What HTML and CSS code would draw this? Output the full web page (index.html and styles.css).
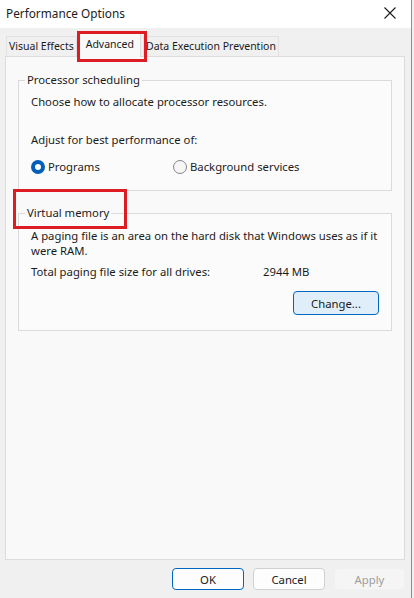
FILE: index.html
```html
<!DOCTYPE html>
<html lang="en">
<head>
<meta charset="utf-8">
<title>Performance Options</title>
<link rel="stylesheet" href="styles.css">
</head>
<body>
<div class="window">
  <div class="titlebar">
    <span class="title">Performance Options</span>
    <svg class="close" width="12" height="12" viewBox="0 0 12 12" aria-label="Close">
      <path d="M0.5 0.5 L11.5 11.5 M11.5 0.5 L0.5 11.5" stroke="#1b1b1b" stroke-width="1.1" fill="none"/>
    </svg>
  </div>
  <div class="client">
    <div class="tabs">
      <div class="tab">Visual Effects</div>
      <div class="tab selected">Advanced</div>
      <div class="tab">Data Execution Prevention</div>
    </div>
    <div class="panel">
      <fieldset class="group">
        <legend>Processor scheduling</legend>
        <p class="line">Choose how to allocate processor resources.</p>
        <p class="line adjust">Adjust for best performance of:</p>
        <div class="radios">
          <label class="radio first"><span class="dot on"></span>Programs</label>
          <label class="radio"><span class="dot"></span>Background services</label>
        </div>
      </fieldset>
      <fieldset class="group vm">
        <legend><span class="marked">Virtual memory</span></legend>
        <p class="para">A paging file is an area on the hard disk that Windows uses as if it were RAM.</p>
        <div class="total">
          <span>Total paging file size for all drives:</span>
          <span>2944 MB</span>
        </div>
        <div class="change-row">
          <button class="btn change">Change...</button>
        </div>
      </fieldset>
    </div>
    <div class="actions">
      <button class="btn default">OK</button>
      <button class="btn">Cancel</button>
      <button class="btn disabled">Apply</button>
    </div>
  </div>
</div>
</body>
</html>
```
FILE: styles.css
```css
* { box-sizing: border-box; }
html, body { margin: 0; padding: 0; }
body {
  width: 414px;
  height: 598px;
  overflow: hidden;
  background: #f0f0f0;
  font-family: "Noto Sans", "Open Sans", sans-serif;
  font-size: 11.3px;
  color: #1b1b1b;
}
.window {
  width: 412px;
  height: 598px;
  display: flex;
  flex-direction: column;
  border-right: 1px solid #8f8f8f;
  background: #f0f0f0;
}
.titlebar {
  height: 28px;
  background: #ffffff;
  display: flex;
  align-items: center;
  justify-content: space-between;
  padding: 0 15px 3px 6px;
}
.title { font-size: 11.8px; }
.client {
  flex: 1;
  display: flex;
  flex-direction: column;
  padding: 4px 6px 8px 5px;
}
.tabs {
  height: 24px;
  display: flex;
  align-items: flex-end;
  padding-left: 1px;
  font-size: 10.5px;
}
.tab {
  height: 20px;
  padding: 0 2px;
  line-height: 19px;
  border: 1px solid #e2e2e2;
  border-bottom: none;
  background: #f0f0f0;
  white-space: nowrap;
}
.tab.selected {
  position: relative;
  height: 24px;
  line-height: 21px;
  padding: 0 6px;
  margin: 0 2px;
  background: #f9f9f9;
  border-color: #dcdcdc;
  z-index: 2;
  margin-bottom: -1px;
}
.tab.selected::after {
  content: "";
  position: absolute;
  left: -3px;
  top: -3px;
  right: -7px;
  bottom: -5px;
  border: 3px solid #dd1c24;
}
.panel {
  flex: 1;
  background: #f9f9f9;
  border: 1px solid #dcdcdc;
  padding: 15px 12px 0 12px;
  display: flex;
  flex-direction: column;
}
.group {
  margin: 0;
  padding: 6px 12px 15px 12px;
  border: 1px solid #dadada;
  background: #fbfbfb;
  min-width: 0;
}
.group legend {
  padding: 0 2px;
  margin-left: -6px;
  line-height: 16px;
}
.line {
  margin: 0;
  line-height: 16px;
}
.adjust { margin-top: 22px; }
.radios {
  display: flex;
  margin-top: 11px;
  height: 16px;
  align-items: center;
}
.radio {
  display: flex;
  align-items: center;
  gap: 3px;
  line-height: 16px;
}
.radio.first { width: 142px; }
.dot {
  width: 14px;
  height: 14px;
  border-radius: 50%;
  border: 1px solid #868686;
  background: #f6f6f6;
}
.dot.on {
  border: 4px solid #005fb8;
  background: #ffffff;
}
.vm { margin-top: 14px; padding-top: 7px; }
.marked { position: relative; }
.marked::after {
  content: "";
  position: absolute;
  left: -14px;
  top: -16px;
  right: -18px;
  bottom: -9px;
  border: 3px solid #dd1c24;
}
.para {
  margin: 0;
  line-height: 15px;
}
.total {
  display: grid;
  grid-template-columns: 232px auto;
  margin-top: 6px;
  line-height: 16px;
}
.change-row {
  display: flex;
  justify-content: flex-end;
  margin-top: 11px;
}
.btn {
  font-family: inherit;
  font-size: 11.3px;
  color: #1b1b1b;
  height: 22px;
  width: 72px;
  padding: 0;
  border: 1px solid #d0d0d0;
  border-radius: 4px;
  background: #fdfdfd;
}
.btn.change {
  width: 86px;
  height: 24px;
  background: #e0eef9;
  border-color: #0067c0;
}
.actions {
  display: flex;
  justify-content: flex-end;
  gap: 9px;
  margin-top: 8px;
}
.btn.default { border-color: #0067c0; }
.btn.disabled {
  color: #9d9d9d;
  background: #f5f5f5;
  border-color: #f0f0f0;
  width: 71px;
}
```
